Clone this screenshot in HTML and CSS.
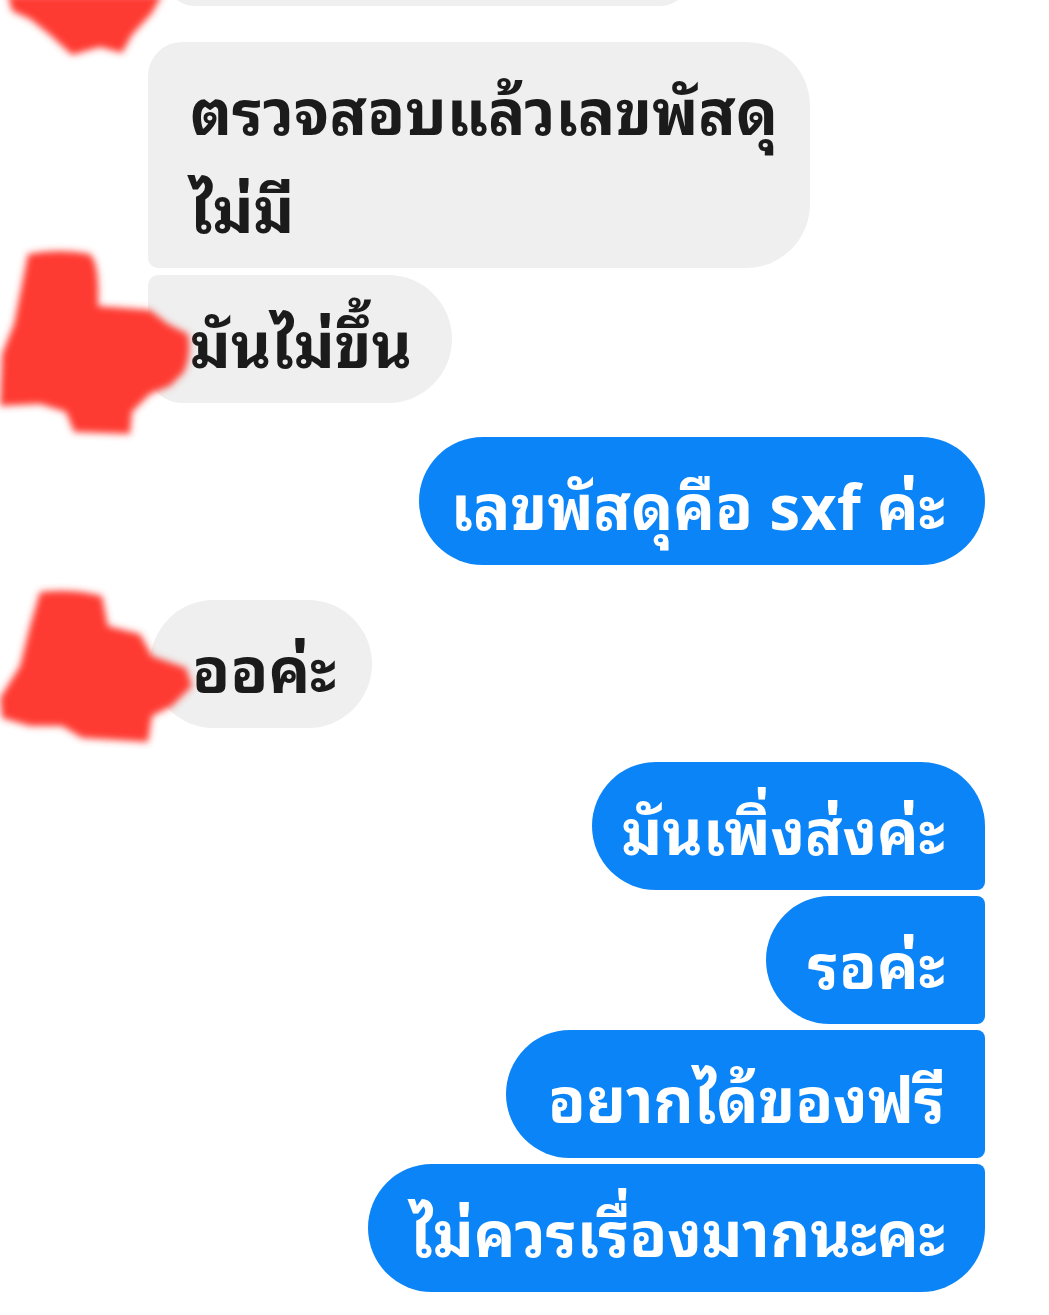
FILE: index.html
```html
<!DOCTYPE html>
<html lang="th">
<head>
<meta charset="utf-8">
<link rel="stylesheet" href="styles.css">
</head>
<body>
<div class="chat">
  <div class="bubble in partial"></div>
  <div class="bubble in first">ตรวจสอบแล้วเลขพัสดุ<br>ไม่มี</div>
  <div class="bubble in last">มันไม่ขึ้น</div>
  <div class="bubble out single">เลขพัสดุคือ sxf ค่ะ</div>
  <div class="bubble in single">ออค่ะ</div>
  <div class="bubble out first">มันเพิ่งส่งค่ะ</div>
  <div class="bubble out mid">รอค่ะ</div>
  <div class="bubble out mid">อยากได้ของฟรี</div>
  <div class="bubble out last">ไม่ควรเรื่องมากนะคะ</div>

  <svg class="scribble s1" width="170" height="70" viewBox="0 0 170 70">
    <defs><filter id="blur" x="-20%" y="-20%" width="140%" height="140%"><feGaussianBlur stdDeviation="3.5"/></filter></defs>
    <path d="M8 0 L162 0 L152 18 L132 40 L122 58 L100 52 L72 60 L50 40 L30 24 L12 16 Z" fill="#fe3a32" filter="url(#blur)"/>
  </svg>
  <svg class="scribble s2" width="200" height="200" viewBox="0 0 200 200">
    <path d="M28 10 Q60 4 90 10 Q100 20 98 62 L150 66 L168 80 L188 90 Q192 110 184 128 L170 142 L150 150 L132 168 L130 190 L74 188 L66 168 L40 160 L0 162 L2 110 L14 80 L22 40 Z" fill="#fe3a32" filter="url(#blur)"/>
  </svg>
  <svg class="scribble s3" width="200" height="160" viewBox="0 0 200 160">
    <path d="M40 6 Q72 2 102 10 L108 40 L140 48 L152 70 L186 82 L192 100 L172 120 L152 130 L148 156 L82 152 L62 140 L30 140 L2 132 L0 112 L20 80 L30 40 Z" fill="#fe3a32" filter="url(#blur)"/>
  </svg>
</div>
</body>
</html>
```
FILE: styles.css
```css
html, body {
  margin: 0;
  padding: 0;
  background: #ffffff;
}
body {
  width: 1049px;
  height: 1315px;
  overflow: hidden;
  font-family: "Noto Sans Thai Looped", "Noto Sans Thai", "Noto Sans", sans-serif;
}
.chat {
  position: relative;
  display: flex;
  flex-direction: column;
  padding: 0 64px 0 148px;
}
.bubble {
  font-size: 62px;
  font-weight: 700;
  line-height: 98px;
  padding: 16px 40px 14px 42px;
  border-radius: 64px;
  white-space: nowrap;
}
.in {
  align-self: flex-start;
  background: #efefef;
  color: #1b1b1b;
}
.out {
  align-self: flex-end;
  background: #0b84f7;
  color: #ffffff;
}
.partial {
  margin-top: -60px;
  margin-left: 17px;
  width: 525px;
  height: 66px;
  padding: 0;
  box-sizing: border-box;
  border-radius: 0 0 30px 30px;
}
.in.first {
  margin-top: 36px;
  width: 662px;
  box-sizing: border-box;
  border-radius: 34px 64px 64px 10px;
}
.in.last {
  margin-top: 7px;
  border-radius: 10px 64px 64px 34px;
}
.out.single {
  margin-top: 34px;
  padding-left: 32px;
}
.in.single {
  margin-top: 35px;
  margin-left: 2px;
  padding-right: 36px;
}
.out.first {
  margin-top: 34px;
  padding-left: 30px;
  border-radius: 64px 64px 8px 64px;
}
.out.mid {
  margin-top: 6px;
  border-radius: 64px 8px 8px 64px;
}
.out.last {
  margin-top: 6px;
  border-radius: 64px 8px 64px 64px;
}
.scribble {
  position: absolute;
  left: 0;
  overflow: visible;
}
.s1 { top: -5px; }
.s2 { top: 244px; }
.s3 { top: 586px; }
```
